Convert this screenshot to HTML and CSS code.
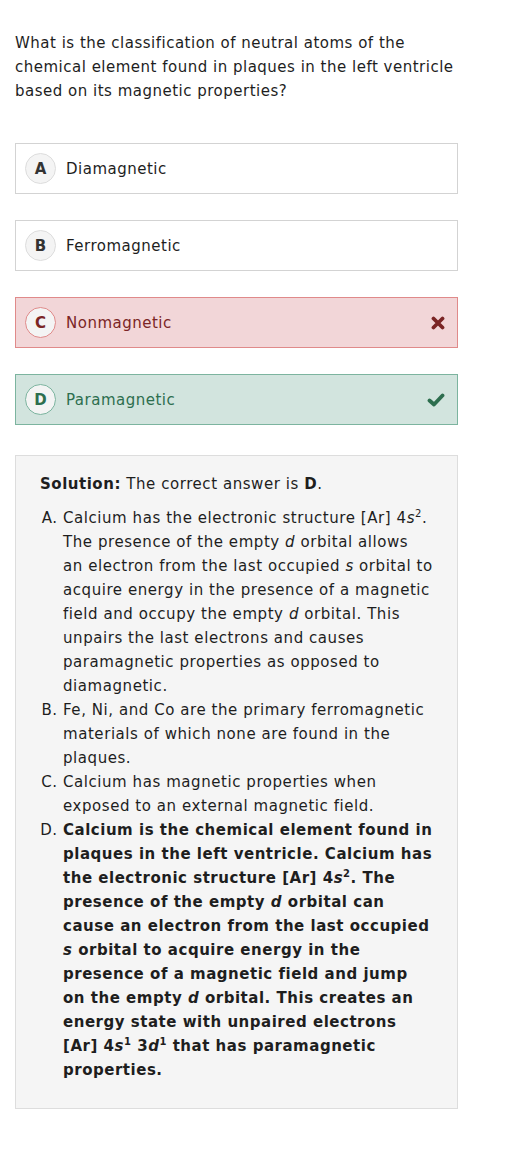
FILE: index.html
```html
<!DOCTYPE html>
<html lang="en">
<head>
    <meta charset="UTF-8">
    <title>Question</title>
    <link rel="stylesheet" href="styles.css">
</head>
<body>
    <div class="quiz">
        <p class="question">What is the classification of neutral atoms of the chemical element found in plaques in the left ventricle based on its magnetic properties?</p>

        <div class="choices">
            <div class="choice">
                <span class="letter">A</span>
                <span class="label">Diamagnetic</span>
            </div>
            <div class="choice">
                <span class="letter">B</span>
                <span class="label">Ferromagnetic</span>
            </div>
            <div class="choice wrong">
                <span class="letter">C</span>
                <span class="label">Nonmagnetic</span>
                <svg class="mark" width="14" height="14" viewBox="0 0 14 14">
                    <path d="M2.5 2.5 L11.5 11.5 M11.5 2.5 L2.5 11.5" stroke="#7b2525" stroke-width="3.8" stroke-linecap="round"/>
                </svg>
            </div>
            <div class="choice right">
                <span class="letter">D</span>
                <span class="label">Paramagnetic</span>
                <svg class="mark" width="18" height="14" viewBox="0 0 18 14">
                    <path d="M2.5 7.5 L7 11.5 L15.5 2.5" fill="none" stroke="#2d6e4e" stroke-width="3.8" stroke-linecap="round" stroke-linejoin="round"/>
                </svg>
            </div>
        </div>

        <div class="solution">
            <p class="answer"><b>Solution:</b> The correct answer is <b>D</b>.</p>
            <ol class="reasons">
                <li>Calcium has the electronic structure [Ar] 4<i>s</i><sup>2</sup>. The presence of the empty <i>d</i> orbital allows an&nbsp;electron from the last occupied <i>s</i> orbital to acquire energy in the presence of a magnetic field and occupy the empty <i>d</i> orbital. This unpairs the last electrons and causes paramagnetic properties as opposed to diamagnetic.</li>
                <li>Fe, Ni, and Co are the primary ferromagnetic materials of which none are found in the plaques.</li>
                <li>Calcium has magnetic properties when exposed to an external magnetic field.</li>
                <li><b>Calcium is the chemical element found in plaques in the left ventricle. Calcium has the electronic structure [Ar] 4<i>s</i><sup>2</sup>. The presence of the empty <i>d</i> orbital can cause an electron from the last occupied <i>s</i> orbital to acquire energy in the presence of a magnetic field and jump on the empty <i>d</i> orbital. This creates an energy state with unpaired electrons [Ar] 4<i>s</i><sup>1</sup> 3<i>d</i><sup>1</sup> that has paramagnetic properties.</b></li>
            </ol>
        </div>
    </div>
</body>
</html>
```

FILE: styles.css
```css
body {
    margin: 0;
    background-color: #ffffff;
    font-family: "DejaVu Sans", Verdana, sans-serif;
    font-size: 15px;
    line-height: 24px;
    letter-spacing: 0.5px;
    color: #1e1e1e;
}
b {
    letter-spacing: 0.4px;
}
.quiz {
    width: 443px;
    padding: 31px 0 40px 15px;
}
.question {
    margin: 0 0 40px 0;
}
.choices {
    display: flex;
    flex-direction: column;
    gap: 26px;
}
.choice {
    display: flex;
    align-items: center;
    gap: 10px;
    padding: 9px;
    border: 1px solid #d3d3d3;
    background-color: #ffffff;
}
.letter {
    display: flex;
    justify-content: center;
    align-items: center;
    width: 29px;
    height: 29px;
    flex: none;
    border: 1px solid #dddddd;
    border-radius: 50%;
    background-color: #f4f4f4;
    font-weight: bold;
    font-size: 15px;
    letter-spacing: 0;
    color: #333333;
}
.label {
    flex: 1;
}
.mark {
    margin-right: 3px;
}
.wrong {
    background-color: #f2d6d8;
    border-color: #e08a8a;
    color: #7b2525;
}
.wrong .letter {
    border-color: #e08a8a;
    color: #7b2525;
}
.right {
    background-color: #d2e4de;
    border-color: #7cb49f;
    color: #2d6e4e;
}
.right .letter {
    border-color: #7cb49f;
    color: #2d6e4e;
}
.solution {
    margin-top: 30px;
    padding: 16px 22px 26px 24px;
    border: 1px solid #dddddd;
    background-color: #f5f5f5;
    letter-spacing: 0.56px;
}
.solution b {
    letter-spacing: 0.52px;
}
.answer {
    margin: 0 0 10px 0;
}
.reasons {
    margin: 0;
    padding-left: 23px;
    list-style-type: upper-alpha;
}
sup {
    font-size: 10px;
    line-height: 0;
}
```
